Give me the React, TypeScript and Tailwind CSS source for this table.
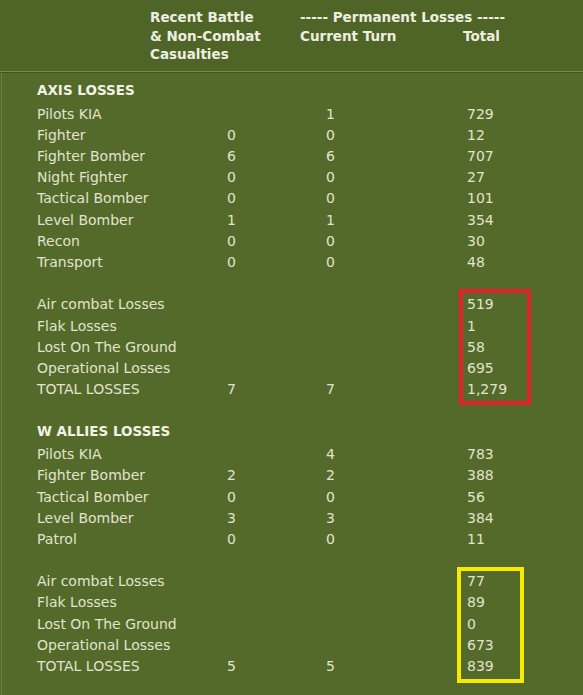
const axisRows = [
  { label: "Pilots KIA", recent: "", turn: "1", total: "729" },
  { label: "Fighter", recent: "0", turn: "0", total: "12" },
  { label: "Fighter Bomber", recent: "6", turn: "6", total: "707" },
  { label: "Night Fighter", recent: "0", turn: "0", total: "27" },
  { label: "Tactical Bomber", recent: "0", turn: "0", total: "101" },
  { label: "Level Bomber", recent: "1", turn: "1", total: "354" },
  { label: "Recon", recent: "0", turn: "0", total: "30" },
  { label: "Transport", recent: "0", turn: "0", total: "48" },
];

const axisSummary = [
  { label: "Air combat Losses", recent: "", turn: "", total: "519" },
  { label: "Flak Losses", recent: "", turn: "", total: "1" },
  { label: "Lost On The Ground", recent: "", turn: "", total: "58" },
  { label: "Operational Losses", recent: "", turn: "", total: "695" },
  { label: "TOTAL LOSSES", recent: "7", turn: "7", total: "1,279" },
];

const alliesRows = [
  { label: "Pilots KIA", recent: "", turn: "4", total: "783" },
  { label: "Fighter Bomber", recent: "2", turn: "2", total: "388" },
  { label: "Tactical Bomber", recent: "0", turn: "0", total: "56" },
  { label: "Level Bomber", recent: "3", turn: "3", total: "384" },
  { label: "Patrol", recent: "0", turn: "0", total: "11" },
];

const alliesSummary = [
  { label: "Air combat Losses", recent: "", turn: "", total: "77" },
  { label: "Flak Losses", recent: "", turn: "", total: "89" },
  { label: "Lost On The Ground", recent: "", turn: "", total: "0" },
  { label: "Operational Losses", recent: "", turn: "", total: "673" },
  { label: "TOTAL LOSSES", recent: "5", turn: "5", total: "839" },
];

type Row = { label: string; recent: string; turn: string; total: string };

const Rows = ({ rows }: { rows: Row[] }) => (
  <>
    {rows.map((row, i) => (
      <div
        key={i}
        className="grid grid-cols-[190px_99px_141px_1fr] h-[21.2px] items-center leading-none"
      >
        <span>{row.label}</span>
        <span>{row.recent}</span>
        <span>{row.turn}</span>
        <span>{row.total}</span>
      </div>
    ))}
  </>
);

const Section = ({
  title,
  rows,
  summary,
}: {
  title: string;
  rows: Row[];
  summary: Row[];
}) => (
  <div>
    <div className="h-[21.2px] flex items-center mb-[1.5px] font-bold text-[13.5px] text-[#f2f2e6] leading-none">
      {title}
    </div>
    <Rows rows={rows} />
    <div className="h-[21.2px]" />
    <Rows rows={summary} />
  </div>
);

export default function App() {
  return (
    <div className="relative w-[583px] h-[695px] overflow-hidden bg-[#546a2a] text-[14px] text-[#e2e3cf] font-['DejaVu_Sans',sans-serif]">
      <div className="h-[71px] bg-[#4f6527] pt-[8px] font-bold text-[13.5px] text-[#eeeee0] leading-[18.5px]">
        <div className="flex">
          <div className="w-[150px]" />
          <div className="w-[150px]">
            <div>Recent Battle</div>
            <div>&amp; Non-Combat</div>
            <div>Casualties</div>
          </div>
          <div>
            <div>----- Permanent Losses -----</div>
            <div className="flex">
              <span className="w-[163px]">Current Turn</span>
              <span>Total</span>
            </div>
          </div>
        </div>
      </div>
      <div className="h-px bg-[#75894c]" />
      <div className="h-px bg-[#42561f]" />
      <div className="border-l border-[#6c8243] ml-px pl-[35px] pt-[7.4px] h-full">
        <Section title="AXIS LOSSES" rows={axisRows} summary={axisSummary} />
        <div className="h-[21.2px]" />
        <Section title="W ALLIES LOSSES" rows={alliesRows} summary={alliesSummary} />
      </div>
      <div className="absolute left-[459px] top-[289px] w-[72px] h-[116px] border-4 border-[#e5212b]" />
      <div className="absolute left-[457px] top-[567px] w-[67px] h-[116px] border-4 border-[#f7ec00]" />
    </div>
  );
}
